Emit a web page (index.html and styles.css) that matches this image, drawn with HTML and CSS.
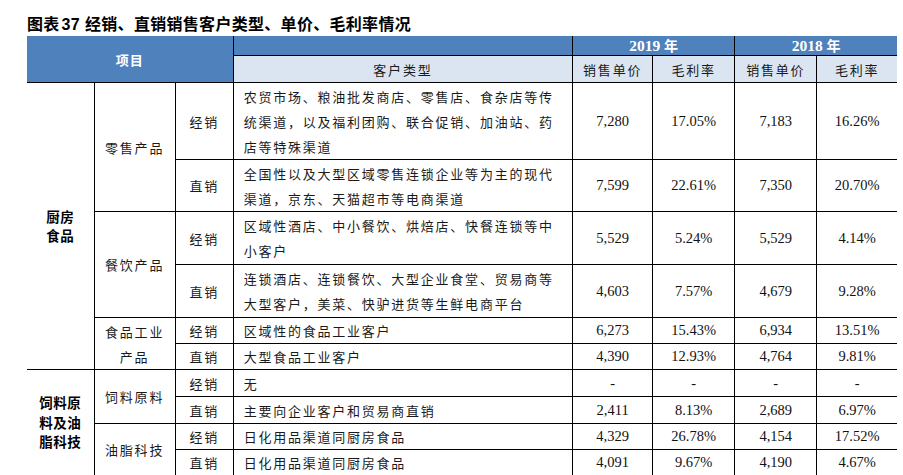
FILE: index.html
```html
<!DOCTYPE html>
<html lang="zh-CN">
<head>
<meta charset="utf-8">
<title>图表37 经销、直销销售客户类型、单价、毛利率情况</title>
<link rel="stylesheet" href="styles.css">
</head>
<body>
<div class="page">
  <div class="title">图表<span class="num">37</span>经销、直销销售客户类型、单价、毛利率情况</div>
  <table class="data">
    <colgroup>
      <col class="c-group"><col class="c-prod"><col class="c-chan"><col class="c-desc">
      <col class="c-num"><col class="c-num2"><col class="c-num2"><col class="c-num">
    </colgroup>
    <thead>
      <tr class="hr1">
        <th class="h-dark h-item" colspan="3" rowspan="2">项目</th>
        <th class="h-dark h-blank"></th>
        <th class="h-dark h-year" colspan="2">2019 <span class="cjk">年</span></th>
        <th class="h-dark h-year" colspan="2">2018 <span class="cjk">年</span></th>
      </tr>
      <tr class="hr2">
        <th class="h-light h-type">客户类型</th>
        <th class="h-light">销售单价</th>
        <th class="h-light">毛利率</th>
        <th class="h-light">销售单价</th>
        <th class="h-light">毛利率</th>
      </tr>
    </thead>
    <tbody>
      <tr class="r-77">
        <td class="grp" rowspan="6">厨房<br>食品</td>
        <td class="lbl" rowspan="2">零售产品</td>
        <td class="lbl">经销</td>
        <td class="desc">农贸市场、粮油批发商店、零售店、食杂店等传统渠道，以及福利团购、联合促销、加油站、药店等特殊渠道</td>
        <td class="n">7,280</td><td class="n">17.05%</td><td class="n">7,183</td><td class="n">16.26%</td>
      </tr>
      <tr class="r-52">
        <td class="lbl">直销</td>
        <td class="desc">全国性以及大型区域零售连锁企业等为主的现代渠道，京东、天猫超市等电商渠道</td>
        <td class="n">7,599</td><td class="n">22.61%</td><td class="n">7,350</td><td class="n">20.70%</td>
      </tr>
      <tr class="r-53">
        <td class="lbl" rowspan="2">餐饮产品</td>
        <td class="lbl">经销</td>
        <td class="desc">区域性酒店、中小餐饮、烘焙店、快餐连锁等中小客户</td>
        <td class="n">5,529</td><td class="n">5.24%</td><td class="n">5,529</td><td class="n">4.14%</td>
      </tr>
      <tr class="r-53">
        <td class="lbl">直销</td>
        <td class="desc">连锁酒店、连锁餐饮、大型企业食堂、贸易商等大型客户，美菜、快驴进货等生鲜电商平台</td>
        <td class="n">4,603</td><td class="n">7.57%</td><td class="n">4,679</td><td class="n">9.28%</td>
      </tr>
      <tr class="r-25">
        <td class="lbl" rowspan="2">食品工业<br>产品</td>
        <td class="lbl">经销</td>
        <td class="desc">区域性的食品工业客户</td>
        <td class="n">6,273</td><td class="n">15.43%</td><td class="n">6,934</td><td class="n">13.51%</td>
      </tr>
      <tr class="r-26">
        <td class="lbl">直销</td>
        <td class="desc">大型食品工业客户</td>
        <td class="n">4,390</td><td class="n">12.93%</td><td class="n">4,764</td><td class="n">9.81%</td>
      </tr>
      <tr class="r-27">
        <td class="grp" rowspan="4">饲料原<br>料及油<br>脂科技</td>
        <td class="lbl" rowspan="2">饲料原料</td>
        <td class="lbl">经销</td>
        <td class="desc">无</td>
        <td class="n">-</td><td class="n">-</td><td class="n">-</td><td class="n">-</td>
      </tr>
      <tr class="r-27">
        <td class="lbl">直销</td>
        <td class="desc">主要向企业客户和贸易商直销</td>
        <td class="n">2,411</td><td class="n">8.13%</td><td class="n">2,689</td><td class="n">6.97%</td>
      </tr>
      <tr class="r-26">
        <td class="lbl" rowspan="2">油脂科技</td>
        <td class="lbl">经销</td>
        <td class="desc">日化用品渠道同厨房食品</td>
        <td class="n">4,329</td><td class="n">26.78%</td><td class="n">4,154</td><td class="n">17.52%</td>
      </tr>
      <tr class="r-25">
        <td class="lbl">直销</td>
        <td class="desc">日化用品渠道同厨房食品</td>
        <td class="n">4,091</td><td class="n">9.67%</td><td class="n">4,190</td><td class="n">4.67%</td>
      </tr>
    </tbody>
  </table>
</div>
</body>
</html>
```
FILE: styles.css
```css
html, body {
  margin: 0;
  padding: 0;
  background: #ffffff;
}

.page {
  padding: 14px 0 0 27px;
  color: #111111;
  font-family: "Noto Sans CJK SC", sans-serif;
}

.title {
  font-family: "Liberation Sans", "Noto Sans CJK SC", sans-serif;
  font-weight: 700;
  font-size: 16px;
  line-height: 22px;
  letter-spacing: 0.3px;
  color: #000000;
  white-space: nowrap;
}

.title .num {
  margin: 0 5px 0 2px;
}

.data {
  border-collapse: collapse;
  table-layout: fixed;
  width: 870px;
  border-top: hidden;
  border-left: hidden;
  border-right: hidden;
  border-bottom: 1px solid #000;
}

.c-group { width: 67px; }
.c-prod  { width: 81px; }
.c-chan  { width: 58px; }
.c-desc  { width: 339px; }
.c-num   { width: 80px; }
.c-num2  { width: 82px; }

.data th,
.data td {
  border: 1px solid #000;
  padding: 0;
  text-align: center;
  vertical-align: middle;
}

/* header */
.hr1 { height: 19px; }
.hr2 { height: 27px; }

.h-dark {
  background: #4f81bd;
  color: #ffffff;
  font-weight: 700;
}

.h-item {
  font-size: 13px;
  letter-spacing: 1px;
}

.h-blank {
  border-bottom: hidden;
}

.h-year {
  font-family: "Liberation Serif", "Noto Sans CJK SC", serif;
  font-size: 15.5px;
  line-height: 18px;
}

.h-year .cjk {
  font-family: "Noto Sans CJK SC", sans-serif;
  font-size: 14px;
}

.h-light {
  background: #dbe5f1;
  color: #1a1a1a;
  font-weight: 400;
  font-size: 13px;
  letter-spacing: 1.8px;
  line-height: 25px;
  border-bottom-width: 2px;
}

.h-type {
  border-top: hidden;
}

/* body rows */
.r-77 { height: 77px; }
.r-52 { height: 52px; }
.r-53 { height: 53px; }
.r-25 { height: 25px; }
.r-26 { height: 26px; }
.r-27 { height: 27px; }

.grp {
  font-weight: 700;
  font-size: 13.5px;
  line-height: 19.5px;
  letter-spacing: 0.5px;
  color: #000;
}

.lbl {
  font-size: 13px;
  letter-spacing: 1.8px;
  line-height: 25px;
  color: #1a1a1a;
}

.desc {
  text-align: left !important;
  padding: 0 9px 0 10px !important;
  font-size: 13px;
  letter-spacing: 1.76px;
  line-height: 25px;
  color: #1a1a1a;
}

.n {
  font-family: "Liberation Serif", serif;
  font-size: 14.5px;
  line-height: 25px;
  color: #111;
}
```
